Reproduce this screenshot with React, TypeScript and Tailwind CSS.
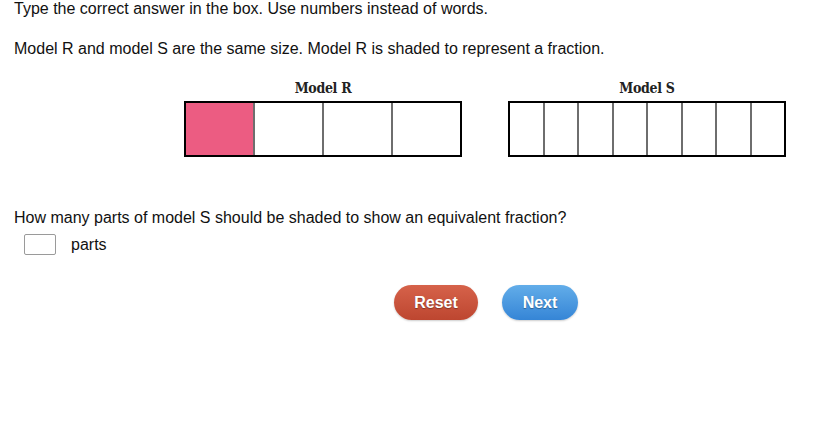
import React from 'react'

const sans = "font-['Liberation_Sans',Arial,sans-serif]"

function FractionModel({ label, parts, shaded }: { label: string; parts: number; shaded: number }) {
  return (
    <div className="flex w-[278px] flex-col items-center">
      <div className="h-[23px] font-['DejaVu_Serif_Condensed','DejaVu_Serif',serif] text-[14px] leading-[20px] font-bold tracking-[-0.3px] text-[#222]">
        {label}
      </div>
      <div className="flex h-[56px] w-full border-2 border-black">
        {Array.from({ length: parts }).map((_, i) => (
          <div
            key={i}
            className={
              'flex-1 ' +
              (i > 0 ? 'border-l-2 border-[#6e6e6e] ' : '') +
              (i < shaded ? 'bg-[#ec5c82]' : 'bg-white')
            }
          />
        ))}
      </div>
    </div>
  )
}

export default function App() {
  return (
    <div className={`h-[432px] w-[836px] bg-white text-[16px] text-[#111] ${sans}`}>
      <div className="px-[14px]">
        <p className="h-[18px] leading-[18px]">Type the correct answer in the box. Use numbers instead of words.</p>
        <p className="mt-[22px] h-[18px] leading-[18px]">
          Model R and model S are the same size. Model R is shaded to represent a fraction.
        </p>
      </div>

      {/* Models */}
      <div className="mt-[20px] flex gap-[46px] pl-[184px]">
        <FractionModel label="Model R" parts={4} shaded={1} />
        <FractionModel label="Model S" parts={8} shaded={0} />
      </div>

      {/* Question */}
      <div className="mt-[52px] px-[14px]">
        <p className="h-[18px] leading-[18px]">
          How many parts of model S should be shaded to show an equivalent fraction?
        </p>
        <div className="mt-[7px] flex items-center gap-[15px] pl-[10px]">
          <input
            type="text"
            className="h-[21px] w-[32px] rounded-[2px] border border-[#9a9a9a] bg-white outline-none"
          />
          <span className="leading-[18px]">parts</span>
        </div>
      </div>

      {/* Buttons */}
      <div className="mt-[30px] flex gap-[24px] pl-[394px]">
        <button className="h-[35px] w-[84px] rounded-full bg-gradient-to-b from-[#d6624a] to-[#bd4630] text-[16px] font-bold text-white [text-shadow:0_1px_1px_rgba(0,0,0,0.35)] shadow-[0_1px_2px_rgba(0,0,0,0.2)]">
          Reset
        </button>
        <button className="h-[35px] w-[76px] rounded-full bg-gradient-to-b from-[#62ade9] to-[#3585d6] text-[16px] font-bold text-white [text-shadow:0_1px_1px_rgba(0,0,0,0.35)] shadow-[0_1px_2px_rgba(0,0,0,0.2)]">
          Next
        </button>
      </div>
    </div>
  )
}
